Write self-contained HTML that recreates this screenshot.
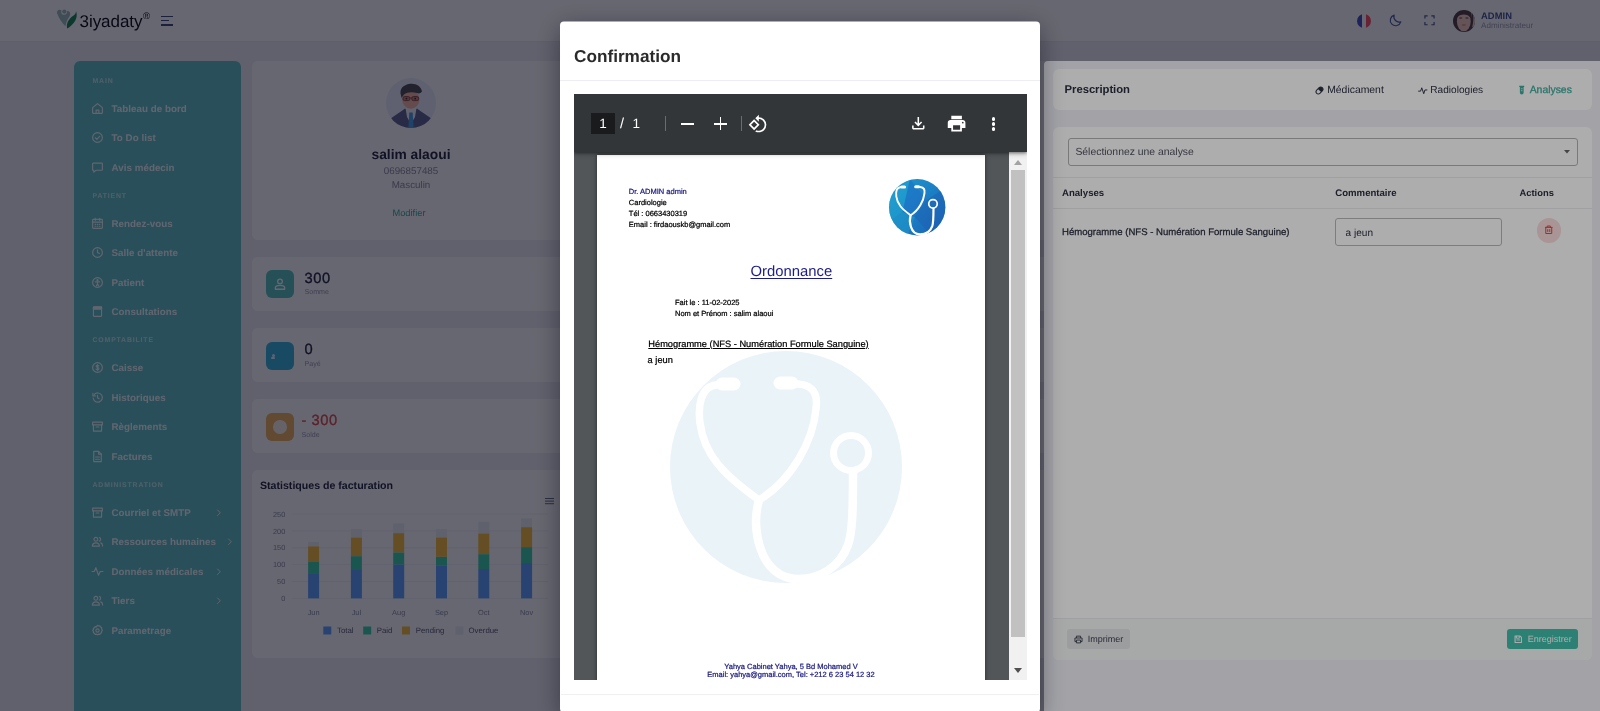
<!DOCTYPE html>
<html lang="fr">
<head>
<meta charset="utf-8">
<title>3iyadaty - Confirmation</title>
<style>
*{box-sizing:border-box;margin:0;padding:0}
html,body{width:1600px;height:711px;overflow:hidden}
body{text-rendering:geometricPrecision;background:#f0f1f7;font-family:"Liberation Sans",sans-serif;color:#333;position:relative}
.abs{position:absolute}
.t{position:absolute;white-space:nowrap;line-height:1;margin-top:.7px}
svg{position:absolute;overflow:visible}

/* ---------- header ---------- */
#hdr{position:absolute;left:0;top:0;width:1600px;height:41px;background:#fff;box-shadow:0 1px 1px rgba(0,0,0,.03)}
/* ---------- sidebar ---------- */
#side{position:absolute;left:74px;top:61px;width:167px;height:700px;background:#67c4c6;border-radius:6px 6px 0 0}
#side .cat{margin-top:.7px;position:absolute;left:18.5px;font-size:6.9px;font-weight:700;letter-spacing:.85px;color:#c4ecec;line-height:1;white-space:nowrap}
#side .it{margin-top:.7px;position:absolute;left:37.5px;font-size:9.75px;font-weight:700;color:#f0fafa;line-height:1;white-space:nowrap;letter-spacing:.05px}
#side svg{left:17px;width:13px;height:13px;fill:none;stroke:#f0fafa;stroke-width:2.1;stroke-linecap:round;stroke-linejoin:round}
#side svg.ch{left:140px;width:7.5px;height:7.5px;stroke-width:3}
/* ---------- cards ---------- */
.card{position:absolute;background:#fff;border-radius:6px}
/* ---------- overlays ---------- */
.ov{position:absolute;left:0;top:0;width:1600px;height:711px;background:rgba(0,0,36,.40)}
.ov2{background:rgba(0,0,0,.32)}
/* ---------- right panel ---------- */
#panel{position:absolute;left:1044px;top:61px;width:556px;height:660px;background:#f0f1f7;border-radius:4px 0 0 0}
/* ---------- modal ---------- */
#modal{position:absolute;left:560px;top:21px;width:480px;height:692px}
#mbg{position:absolute;left:0;top:0;width:480px;height:690.5px;background:#fff;border-radius:4px;transform:translateY(.5px);box-shadow:0 6px 26px rgba(0,0,20,.42)}
#pdf{position:absolute;left:14px;top:73px;width:453px;height:586px;background:#525659;overflow:hidden}
#tb{position:absolute;left:0;top:0;width:453px;height:58px;background:#323639;box-shadow:0 1px 3px rgba(0,0,0,.45),0 2px 6px rgba(0,0,0,.2)}
#page{position:absolute;left:23px;top:61px;width:388px;height:560px;background:#fff;box-shadow:0 0 4px rgba(0,0,0,.5);font-family:"Liberation Sans",sans-serif;color:#000}
#page .t{-webkit-text-stroke-width:.22px}
</style>
</head>
<body>
<div id="root" style="position:absolute;left:0;top:0;width:1600px;height:711px;overflow:hidden;will-change:transform">

<!-- ================= BASE PAGE ================= -->
<div id="hdr">
  <!-- logo -->
  <svg style="left:56px;top:9px;width:22px;height:20px" viewBox="0 0 22 20">
    <path d="M1.2 4.5C0.2 1.8 3.2-0.6 5.6 1.4C4.6 3.4 5.6 5.6 7.8 5.8C10 6 11.4 4.2 10.9 2.2C13.2 1.6 15.6 4.2 13.4 7.4C11.2 10.4 10.2 13.2 9.4 17.2C5.6 13.4 2.6 9 1.2 4.5Z" fill="#9fbfbc"/>
    <circle cx="8.3" cy="2.6" r="2.1" fill="#9fbfbc"/>
    <path d="M11.2 19.5C10 14.5 12.6 9.6 18 6.2C19.6 5 20 3.4 20 2.2C21.6 6.4 20.4 10.8 17.4 14.2C15.6 16.4 13.4 18.4 11.2 19.5Z" fill="#1f8a5c"/>
  </svg>
  <div class="t" style="left:79.5px;top:12.5px;font-size:17px;color:#15151f;letter-spacing:-.05px">3iyadaty</div>
  <div class="t" style="left:143px;top:11px;font-size:9.5px;color:#15151f">®</div>
  <div class="abs" style="left:161px;top:16px;width:11.5px;height:1.25px;background:#45507e"></div>
  <div class="abs" style="left:161px;top:20.2px;width:8px;height:1.25px;background:#45507e"></div>
  <div class="abs" style="left:161px;top:24.4px;width:11.5px;height:1.25px;background:#45507e"></div>
  <!-- right icons -->
  <div class="abs" style="left:1357px;top:13.6px;width:14.2px;height:14.2px;border-radius:50%;overflow:hidden;background:#fff">
    <div class="abs" style="left:0;top:0;width:4.7px;height:14px;background:#4a56c8"></div>
    <div class="abs" style="left:9.3px;top:0;width:4.7px;height:14px;background:#ff5568"></div>
  </div>
  <svg style="left:1388px;top:13.3px;width:15px;height:15px" viewBox="0 0 24 24" fill="none" stroke="#4f62a8" stroke-width="1.9" stroke-linecap="round" stroke-linejoin="round"><path d="M20.5 14.2A8.6 8.6 0 0 1 9.8 3.5a8.6 8.6 0 1 0 10.7 10.7z"/></svg>
  <svg style="left:1423.9px;top:15.3px;width:11px;height:10.6px" viewBox="0 0 24 24" preserveAspectRatio="none" fill="none" stroke="#4f5c96" stroke-width="2.6" stroke-linecap="butt" stroke-linejoin="miter"><path d="M2 8V2h6M16 2h6v6M22 16v6h-6M8 22H2v-6"/></svg>
  <!-- avatar -->
  <svg style="left:1453px;top:9.7px;width:22px;height:22px" viewBox="0 0 22 22">
    <clipPath id="hvc"><circle cx="11" cy="11" r="11"/></clipPath>
    <g clip-path="url(#hvc)">
      <rect width="22" height="22" fill="#58444a"/>
      <rect x="18.5" y="3" width="4" height="14" fill="#e9d2cc"/>
      <path d="M19.5 2C21 6 20.5 14 18.5 19L17 12Z" fill="#58444a"/>
      <ellipse cx="10.8" cy="11.5" rx="6.9" ry="9.8" fill="#f8cfc0"/>
      <path d="M3.5 8C4 3.5 8 1 11.5 1.5C15 2 17.5 4.5 18 8C16 5.5 13.5 4.5 11 4.5C8 4.5 5.5 5.5 3.5 8Z" fill="#58444a"/>
      <ellipse cx="7.7" cy="8" rx="1.7" ry=".8" fill="#7d5f60"/><ellipse cx="13.9" cy="8" rx="1.7" ry=".8" fill="#7d5f60"/>
      <ellipse cx="10.8" cy="15" rx="2.3" ry=".8" fill="#d98c86"/>
    </g>
  </svg>
  <div class="t" style="left:1481px;top:11.3px;font-size:9.35px;font-weight:700;color:#4a5a98;letter-spacing:.1px">ADMIN</div>
  <div class="t" style="left:1481px;top:21.8px;font-size:8.1px;color:#a3a6b5">Administrateur</div>
</div>
<div id="side">
  <div class="cat" style="top:17.7px">MAIN</div>
  <svg viewBox="0 0 24 24" style="top:41.0px;color:#f0fafa"><path d="M3 10.5 12 3l9 7.5V20a1 1 0 0 1-1 1H4a1 1 0 0 1-1-1z"/><path d="M9.500 21v-6h5v6"/></svg><div class="it" style="top:43.2px">Tableau de bord</div>
  <svg viewBox="0 0 24 24" style="top:70.0px;color:#f0fafa"><circle cx="12" cy="12" r="9"/><path d="M8 12.500l2.800 2.800L16 9.800"/></svg><div class="it" style="top:72.2px">To Do list</div>
  <svg viewBox="0 0 24 24" style="top:100.0px;color:#f0fafa"><path d="M4 4h16a1 1 0 0 1 1 1v11a1 1 0 0 1-1 1H9.500L5 20.500V17H4a1 1 0 0 1-1-1V5a1 1 0 0 1 1-1z"/></svg><div class="it" style="top:102.2px">Avis médecin</div>
  <div class="cat" style="top:132.7px">PATIENT</div>
  <svg viewBox="0 0 24 24" style="top:156.0px;color:#f0fafa"><rect x="3" y="4.500" width="18" height="16.500" rx="1.500"/><path d="M3 9.500h18M8 2.500v4M16 2.500v4M7.500 13.500h1M11.500 13.500h1M15.500 13.500h1M7.500 17h1M11.500 17h1M15.500 17h1"/></svg><div class="it" style="top:158.2px">Rendez-vous</div>
  <svg viewBox="0 0 24 24" style="top:185.0px;color:#f0fafa"><circle cx="12" cy="12" r="9"/><path d="M12 7v5l3.500 2"/></svg><div class="it" style="top:187.2px">Salle d'attente</div>
  <svg viewBox="0 0 24 24" style="top:215.0px;color:#f0fafa"><circle cx="12" cy="12" r="9"/><circle cx="12" cy="7.800" r="1" fill="currentColor"/><path d="M8 10.800h8M12 10.800v3.700M12 14.500l-2 3.500M12 14.500l2 3.500"/></svg><div class="it" style="top:217.2px">Patient</div>
  <svg viewBox="0 0 24 24" style="top:244.0px;color:#f0fafa"><rect x="4.500" y="3.500" width="15" height="17.500" rx="1"/><path d="M4.500 4h15v3.500h-15z" fill="currentColor"/></svg><div class="it" style="top:246.2px">Consultations</div>
  <div class="cat" style="top:276.7px">COMPTABILITE</div>
  <svg viewBox="0 0 24 24" style="top:300.0px;color:#f0fafa"><circle cx="12" cy="12" r="9"/><path d="M12 6.500v11M14.600 9.300c-.5-1-1.500-1.500-2.600-1.500-1.500 0-2.600.8-2.600 2s1 1.800 2.600 2.100c1.700.3 2.700.9 2.700 2.200s-1.200 2.100-2.700 2.100c-1.200 0-2.300-.5-2.800-1.500"/></svg><div class="it" style="top:302.2px">Caisse</div>
  <svg viewBox="0 0 24 24" style="top:330.0px;color:#f0fafa"><path d="M4 13a8.500 8.500 0 1 0 2.200-6.700"/><path d="M3.500 4.500v4.500h4.500"/><path d="M12 8v4.500l3 1.800"/></svg><div class="it" style="top:332.2px">Historiques</div>
  <svg viewBox="0 0 24 24" style="top:359.0px;color:#f0fafa"><path d="M3 4h18v5H3z"/><path d="M4.500 9v11.500h15V9M9.500 13h5"/></svg><div class="it" style="top:361.2px">Règlements</div>
  <svg viewBox="0 0 24 24" style="top:389.0px;color:#f0fafa"><path d="M6 2.500h8l5 5V21a.5.5 0 0 1-.5.500h-13a.5.5 0 0 1-.5-.5V3a.5.5 0 0 1 .5-.5z"/><path d="M14 2.500v5h5M8.500 13h7M8.500 17h7"/></svg><div class="it" style="top:391.2px">Factures</div>
  <div class="cat" style="top:421.7px">ADMINISTRATION</div>
  <svg viewBox="0 0 24 24" style="top:445.0px;color:#f0fafa"><path d="M3 4h18v5H3z"/><path d="M4.500 9v11.500h15V9M9.500 13h5"/></svg><div class="it" style="top:447.2px">Courriel et SMTP</div>
  <svg class="ch" viewBox="0 0 24 24" style="left:140.5px;top:447.8px"><path d="M8 3l9 9-9 9"/></svg>
  <svg viewBox="0 0 24 24" style="top:474.0px;color:#f0fafa"><circle cx="9" cy="8" r="3.500"/><path d="M2.500 20.500c0-3.600 2.900-6 6.500-6s6.500 2.400 6.500 6z"/><path d="M15.500 4.700a3.500 3.500 0 0 1 0 6.600M18 14.500c2.200.8 3.500 2.800 3.500 6"/></svg><div class="it" style="top:476.2px">Ressources humaines</div>
  <svg class="ch" viewBox="0 0 24 24" style="left:151.5px;top:476.8px"><path d="M8 3l9 9-9 9"/></svg>
  <svg viewBox="0 0 24 24" style="top:504.0px;color:#f0fafa"><path d="M2 12h4l3-7 5 14 3-7h5"/></svg><div class="it" style="top:506.2px">Données médicales</div>
  <svg class="ch" viewBox="0 0 24 24" style="left:140.5px;top:506.8px"><path d="M8 3l9 9-9 9"/></svg>
  <svg viewBox="0 0 24 24" style="top:533.0px;color:#f0fafa"><circle cx="9" cy="8" r="3.500"/><path d="M2.500 20.500c0-3.600 2.900-6 6.500-6s6.500 2.400 6.500 6z"/><path d="M15.500 4.700a3.500 3.500 0 0 1 0 6.600M18 14.500c2.200.8 3.500 2.800 3.500 6"/></svg><div class="it" style="top:535.2px">Tiers</div>
  <svg class="ch" viewBox="0 0 24 24" style="left:140.5px;top:535.8px"><path d="M8 3l9 9-9 9"/></svg>
  <svg viewBox="0 0 24 24" style="top:563.0px;color:#f0fafa"><path d="M12 2.500l2 1.200 2.300-.3 1.200 2 2.100 1-.1 2.300L21 12l-1.500 1.800.1 2.300-2.100 1-1.200 2-2.300-.3-2 1.200-2-1.200-2.300.3-1.200-2-2.100-1 .1-2.300L3 12l1.500-1.800-.1-2.300 2.100-1 1.200-2 2.300.3z"/><circle cx="12" cy="12" r="3"/></svg><div class="it" style="top:565.2px">Parametrage</div>
</div>
<div id="main">
  <!-- profile card -->
  <div class="card" style="left:252px;top:61px;width:1333px;height:179px"></div>
  <svg style="left:386px;top:77.6px;width:50px;height:50px" viewBox="0 0 50 50">
    <clipPath id="avc"><circle cx="25" cy="25" r="25"/></clipPath>
    <g clip-path="url(#avc)">
      <rect width="50" height="50" fill="#e9f0ff"/>
      <path d="M4 41C9 37 15 34 19 30.5L25 33L31 30.5C35 34 41 37 46 41L46 52H4Z" fill="#646a96"/>
      <path d="M19.5 30L25 31.5L30.5 30L29 39L25 46L21 39Z" fill="#f4f6fb"/>
      <path d="M23.3 34.5h3.4l.9 15.5h-5.2z" fill="#4fa6ea"/>
      <ellipse cx="24.8" cy="21.5" rx="8.7" ry="9.3" fill="#f7bda6"/>
      <path d="M15 17.5C13 11 17 7 24 5.8C30 5 35 8 36 13.5C34.5 15.5 33 15.8 31 15C26 13.5 21 14 18 16.5C17 18 16 19 15.5 20Z" fill="#55555e"/>
      <g fill="#c98a78" stroke="#8a4a44" stroke-width=".9"><rect x="17" y="18.6" width="6.8" height="4" rx="1.5"/><rect x="25.8" y="18.6" width="6.8" height="4" rx="1.5"/></g><path d="M23.8 20h2" stroke="#8a4a44" stroke-width=".8"/><circle cx="20.4" cy="20.6" r=".9" fill="#4a3030"/><circle cx="29.2" cy="20.6" r=".9" fill="#4a3030"/>
    </g>
  </svg>
  <div class="t" style="left:311px;width:200px;text-align:center;top:147.7px;font-size:13.8px;font-weight:700;color:#2c2f45">salim alaoui</div>
  <div class="t" style="left:311px;width:200px;text-align:center;top:166.7px;font-size:9.8px;color:#8c8fa3">0696857485</div>
  <div class="t" style="left:311px;width:200px;text-align:center;top:180.7px;font-size:9.8px;color:#8c8fa3">Masculin</div>
  <div class="t" style="left:309px;width:200px;text-align:center;top:208.5px;font-size:9.3px;color:#3fae9f">Modifier</div>

  <!-- stat cards -->
  <div class="card" style="left:252px;top:257px;width:1333px;height:54px"></div>
  <div class="abs" style="left:266px;top:270px;width:27.5px;height:28px;border-radius:6px;background:#5fc6c0"></div>
  <svg style="left:272.8px;top:277px;width:14px;height:14px" viewBox="0 0 24 24" fill="none" stroke="#fff" stroke-width="2.2"><circle cx="12" cy="7.5" r="4"/><path d="M4 21v-2.5c0-2.5 2.5-4 8-4s8 1.5 8 4V21z" stroke-linejoin="round"/></svg>
  <div class="t" style="left:304.5px;top:271.2px;font-size:14.7px;letter-spacing:.55px;color:#2c2f45;-webkit-text-stroke:.3px #2c2f45">300</div>
  <div class="t" style="left:304.5px;top:288.7px;font-size:7.1px;color:#9a9db0">Somme</div>

  <div class="card" style="left:252px;top:328px;width:1333px;height:54px"></div>
  <div class="abs" style="left:266px;top:342px;width:27.5px;height:27.5px;border-radius:6px;background:#3fb6dc"></div>
  <div class="abs" style="left:272px;top:353.5px;width:3px;height:3px;border-radius:50%;background:#e6f3fb"></div>
  <div class="abs" style="left:271px;top:356.5px;width:3.5px;height:2px;border-radius:1px;background:#e6f3fb"></div>
  <div class="t" style="left:304.5px;top:342.6px;font-size:14.7px;letter-spacing:.55px;color:#2c2f45;-webkit-text-stroke:.3px #2c2f45">0</div>
  <div class="t" style="left:304.5px;top:360.7px;font-size:7.1px;color:#9a9db0">Payé</div>

  <div class="card" style="left:252px;top:398.5px;width:1333px;height:54.5px"></div>
  <div class="abs" style="left:266px;top:413px;width:27.5px;height:27.5px;border-radius:6px;background:#f0b565"></div>
  <div class="abs" style="left:273px;top:420px;width:13.5px;height:13.5px;border-radius:50%;background:#faf3ea"></div>
  <div class="t" style="left:301.5px;top:413.5px;font-size:14.7px;letter-spacing:.55px;color:#e0524f;-webkit-text-stroke:.3px #e0524f">- 300</div>
  <div class="t" style="left:301.5px;top:431.7px;font-size:7.1px;color:#9a9db0">Solde</div>

  <!-- chart card -->
  <div class="card" style="left:252px;top:470px;width:1333px;height:187.5px"></div>
  <div class="t" style="left:260px;top:480.3px;font-size:10.6px;font-weight:700;color:#2c2f45">Statistiques de facturation</div>
  <div class="abs" style="left:545px;top:498.3px;width:9px;height:1.2px;background:#6e7288;box-shadow:0 2.6px 0 #6e7288,0 5.2px 0 #6e7288"></div>
  <svg style="left:0;top:0;width:1600px;height:711px" viewBox="0 0 1600 711" font-family="Liberation Sans, sans-serif">
    <line x1="292" y1="598.4" x2="548" y2="598.4" stroke="#f1f2f7" stroke-width="1"/><text x="285.3" y="601.0" text-anchor="end" font-size="7.4" fill="#8e91a6">0</text><line x1="292" y1="581.5" x2="548" y2="581.5" stroke="#f1f2f7" stroke-width="1"/><text x="285.3" y="584.1" text-anchor="end" font-size="7.4" fill="#8e91a6">50</text><line x1="292" y1="564.6" x2="548" y2="564.6" stroke="#f1f2f7" stroke-width="1"/><text x="285.3" y="567.2" text-anchor="end" font-size="7.4" fill="#8e91a6">100</text><line x1="292" y1="547.8" x2="548" y2="547.8" stroke="#f1f2f7" stroke-width="1"/><text x="285.3" y="550.4" text-anchor="end" font-size="7.4" fill="#8e91a6">150</text><line x1="292" y1="530.9" x2="548" y2="530.9" stroke="#f1f2f7" stroke-width="1"/><text x="285.3" y="533.5" text-anchor="end" font-size="7.4" fill="#8e91a6">200</text><line x1="292" y1="514.0" x2="548" y2="514.0" stroke="#f1f2f7" stroke-width="1"/><text x="285.3" y="516.6" text-anchor="end" font-size="7.4" fill="#8e91a6">250</text>
    <rect x="308.1" y="542.0" width="11" height="4.4" fill="#eceef5"/><rect x="308.1" y="546.4" width="11" height="15.2" fill="#f8c143"/><rect x="308.1" y="561.6" width="11" height="11.5" fill="#45d3ac"/><rect x="308.1" y="573.1" width="11" height="25.3" fill="#65a5ff"/><rect x="350.9" y="528.9" width="11" height="8.8" fill="#eceef5"/><rect x="350.9" y="537.6" width="11" height="18.6" fill="#f8c143"/><rect x="350.9" y="556.2" width="11" height="13.8" fill="#45d3ac"/><rect x="350.9" y="570.0" width="11" height="28.4" fill="#65a5ff"/><rect x="393.2" y="523.5" width="11" height="9.8" fill="#eceef5"/><rect x="393.2" y="533.2" width="11" height="19.2" fill="#f8c143"/><rect x="393.2" y="552.5" width="11" height="12.2" fill="#45d3ac"/><rect x="393.2" y="564.6" width="11" height="33.8" fill="#65a5ff"/><rect x="436.0" y="528.9" width="11" height="8.8" fill="#eceef5"/><rect x="436.0" y="537.6" width="11" height="19.2" fill="#f8c143"/><rect x="436.0" y="556.9" width="11" height="8.8" fill="#45d3ac"/><rect x="436.0" y="565.7" width="11" height="32.7" fill="#65a5ff"/><rect x="478.3" y="521.8" width="11" height="11.8" fill="#eceef5"/><rect x="478.3" y="533.6" width="11" height="20.6" fill="#f8c143"/><rect x="478.3" y="554.2" width="11" height="14.9" fill="#45d3ac"/><rect x="478.3" y="569.0" width="11" height="29.4" fill="#65a5ff"/><rect x="521.1" y="518.4" width="11" height="8.8" fill="#eceef5"/><rect x="521.1" y="527.2" width="11" height="19.9" fill="#f8c143"/><rect x="521.1" y="547.1" width="11" height="15.9" fill="#45d3ac"/><rect x="521.1" y="563.0" width="11" height="35.4" fill="#65a5ff"/>
    <text x="313.6" y="614.8" text-anchor="middle" font-size="7.4" fill="#8e91a6">Jun</text><text x="356.4" y="614.8" text-anchor="middle" font-size="7.4" fill="#8e91a6">Jul</text><text x="398.7" y="614.8" text-anchor="middle" font-size="7.4" fill="#8e91a6">Aug</text><text x="441.5" y="614.8" text-anchor="middle" font-size="7.4" fill="#8e91a6">Sep</text><text x="483.8" y="614.8" text-anchor="middle" font-size="7.4" fill="#8e91a6">Oct</text><text x="526.6" y="614.8" text-anchor="middle" font-size="7.4" fill="#8e91a6">Nov</text>
    <rect x="323.3" y="626.5" width="8" height="8" fill="#65a5ff"/><text x="337" y="633.2" font-size="7.8" fill="#5e6178">Total</text>
    <rect x="363.2" y="626.5" width="8" height="8" fill="#45d3ac"/><text x="376.7" y="633.2" font-size="7.8" fill="#5e6178">Paid</text>
    <rect x="402" y="626.5" width="8" height="8" fill="#f8c143"/><text x="415.8" y="633.2" font-size="7.8" fill="#5e6178">Pending</text>
    <rect x="455.4" y="626.5" width="8" height="8" fill="#eceef5"/><text x="468.5" y="633.2" font-size="7.8" fill="#5e6178">Overdue</text>
  </svg>
</div>

<div class="ov"></div>

<!-- ================= PRESCRIPTION PANEL ================= -->
<div id="panel">
  <div class="card" style="left:9.4px;top:8.0px;width:538.4px;height:41px"></div>
  <div class="t" style="left:20.6px;top:23.3px;font-size:11.3px;font-weight:700;color:#2c2f3f;letter-spacing:-.05px">Prescription</div>
  <!-- tabs -->
  <svg style="left:270.6px;top:24.5px;width:9px;height:9px" viewBox="0 0 24 24"><g transform="rotate(-45 12 12)"><rect x="1.5" y="6" width="21" height="12" rx="6" fill="none" stroke="#2c2f3f" stroke-width="2.6"/><path d="M12 6h4.5a6 6 0 0 1 0 12H12z" fill="#2c2f3f"/></g></svg>
  <div class="t" style="left:283.2px;top:24.6px;font-size:10.4px;color:#2c2f3f">Médicament</div>
  <svg style="left:374.0px;top:24.5px;width:9.5px;height:9.5px" viewBox="0 0 24 24" fill="none" stroke="#2c2f3f" stroke-width="2.4" stroke-linejoin="round" stroke-linecap="round"><path d="M1.5 13h5l3-8.5 5 15 3-9.5h5"/></svg>
  <div class="t" style="left:386.3px;top:24.6px;font-size:10.1px;color:#2c2f3f">Radiologies</div>
  <svg style="left:473.5px;top:24.3px;width:7.5px;height:10px" viewBox="0 0 18 24"><path d="M3 1.5h12v3h-1.5V18a4.5 4.5 0 0 1-9 0V4.5H3z" fill="#3fae9f"/><path d="M7 7h4v3H7zM7 12h4v3H7z" fill="#fff" opacity=".55"/></svg>
  <div class="t" style="left:485.7px;top:24.6px;font-size:10.4px;color:#3fae9f;-webkit-text-stroke:.3px #3fae9f">Analyses</div>

  <div class="card" style="left:9.4px;top:65.6px;width:538.4px;height:533.4px"></div>
  <div class="abs" style="left:9.4px;top:556.6px;width:538.4px;height:42.4px;background:#f7f9f8;border-top:1px solid #ececf1;border-radius:0 0 6px 6px"></div>
  <div class="abs" style="left:23.5px;top:77.2px;width:510px;height:27.4px;border:1px solid #b3b3b3;border-radius:3px"></div>
  <div class="t" style="left:31.4px;top:86.5px;font-size:10.4px;color:#50525e">Sélectionnez une analyse</div>
  <svg style="left:519.5px;top:89.0px;width:6px;height:3.4px" viewBox="0 0 6 3.4"><path d="M0 0h6L3 3.4z" fill="#666"/></svg>
  <div class="abs" style="left:9.4px;top:115.5px;width:538.4px;height:1px;background:#ececf1"></div>
  <div class="t" style="left:18.0px;top:127.2px;font-size:9.6px;font-weight:700;color:#2c2f3f">Analyses</div>
  <div class="t" style="left:291.3px;top:127.2px;font-size:9.6px;font-weight:700;color:#2c2f3f">Commentaire</div>
  <div class="t" style="left:475.5px;top:126.6px;font-size:9.4px;font-weight:700;color:#2c2f3f">Actions</div>
  <div class="abs" style="left:9.4px;top:147.0px;width:538.4px;height:1px;background:#ececf1"></div>
  <div class="t" style="left:18.0px;top:166.0px;font-size:9.57px;color:#2c2f3f;-webkit-text-stroke:.25px #2c2f3f">Hémogramme (NFS - Numération Formule Sanguine)</div>
  <div class="abs" style="left:291.3px;top:157.3px;width:167.2px;height:28px;border:1px solid #b9b9bd;border-radius:3px;background:#fff"></div>
  <div class="t" style="left:301.6px;top:167.2px;font-size:10.05px;color:#2c2f3f">a jeun</div>
  <div class="abs" style="left:492.6px;top:156.8px;width:24.8px;height:24.8px;border-radius:50%;background:#f9dcdc"></div>
  <svg style="left:500.3px;top:164.2px;width:9.5px;height:9.5px" viewBox="0 0 24 24" fill="none" stroke="#e0463f" stroke-width="2.5" stroke-linejoin="round"><path d="M2.5 6h19M8 6V2.5h8V6M4.5 6v15.5h15V6M9.5 10.5v7M14.5 10.5v7"/></svg>
  <!-- footer buttons -->
  <div class="abs" style="left:23.4px;top:568.0px;width:62.6px;height:20.3px;border-radius:3px;background:#e6e7ea"></div>
  <svg style="left:30.0px;top:573.7px;width:9px;height:9px" viewBox="0 0 24 24" fill="none" stroke="#3a3d4c" stroke-width="2.4" stroke-linejoin="round"><path d="M6.5 8V3h11v5M6.5 17.5H2.5V8h19v9.5h-4M6.5 13.5h11V21h-11z"/></svg>
  <div class="t" style="left:43.7px;top:573.7px;font-size:9px;color:#3a3d4c">Imprimer</div>
  <div class="abs" style="left:463.4px;top:568.0px;width:70.2px;height:20.3px;border-radius:3px;background:#42bfab"></div>
  <svg style="left:470.3px;top:574.0px;width:8.5px;height:8.5px" viewBox="0 0 24 24" fill="none" stroke="#fff" stroke-width="3" stroke-linejoin="round"><path d="M3 3h14l4 4v14H3z"/><path d="M7 3v6h8V3M7 14h10" stroke-width="2.6"/></svg>
  <div class="t" style="left:483.7px;top:573.7px;font-size:9px;color:#fff">Enregistrer</div>
</div>

<div class="ov ov2"></div>

<!-- ================= CONFIRMATION MODAL ================= -->
<div id="modal">
  <div id="mbg"></div>
  <div class="t" style="left:14px;top:26.8px;font-size:17.2px;font-weight:700;color:#2b2b2b">Confirmation</div>
  <div class="abs" style="left:0;top:59px;width:480px;height:1px;background:#eeeef2"></div>
  <div id="pdf">
    <div id="page">
      <!-- watermark -->
      <svg style="left:73.2px;top:195.7px;width:232px;height:232px" viewBox="-116 -116 232 232">
        <circle r="116" fill="#e9f3f8"/>
        <g fill="none" stroke="#fff" stroke-linecap="round">
          <path d="M-70 -82C-86 -80 -88 -60 -86 -44C-82 -12 -62 8 -27 33M12 -83C28 -82 32 -72 30 -58C27 -26 6 13 -27 33" stroke-width="7.5"/>
          <path d="M-27 33C-32 50 -30 68 -26 80C-20 100 -6 112 12 112C34 112 54 100 62 78C66 66 67 50 67 6" stroke-width="8.5"/>
          <circle cx="65" cy="-14" r="17.5" stroke-width="7"/>
          <path d="M-64 -83h12M-6 -84h12" stroke-width="13"/>
        </g>
      </svg>
      <!-- logo -->
      <svg style="left:292.3px;top:23.8px;width:56.4px;height:56.4px" viewBox="-116 -116 232 232">
        <defs><linearGradient id="lg" x1="0" y1="0" x2="1" y2="1"><stop offset="0" stop-color="#1f9ccf"/><stop offset=".5" stop-color="#1b7fc4"/><stop offset="1" stop-color="#1a5fb4"/></linearGradient></defs>
        <circle r="116" fill="url(#lg)"/>
        <clipPath id="cc"><circle r="116"/></clipPath><g clip-path="url(#cc)"><path d="M-116 -40L-30 -116L-60 20L-116 60Z" fill="#21a6cf" opacity=".55"/><path d="M-60 20L-30 -116L40 -30L-10 40Z" fill="#1e6fc4" opacity=".6"/><path d="M40 -30L116 -80L116 60L60 116L-10 40Z" fill="#1d5fb2" opacity=".5"/><path d="M-116 60L-60 20L-10 40L-40 116Z" fill="#1f9bc9" opacity=".5"/></g>
        <g fill="none" stroke="#fff" stroke-linecap="round">
          <path d="M-70 -82C-86 -80 -88 -60 -86 -44C-82 -12 -62 8 -27 33M12 -83C28 -82 32 -72 30 -58C27 -26 6 13 -27 33" stroke-width="8"/>
          <path d="M-27 33C-32 50 -30 68 -26 80C-20 100 -6 112 12 112C34 112 54 100 62 78C66 66 67 50 67 6" stroke-width="9"/>
          <circle cx="65" cy="-14" r="17.5" stroke-width="7"/>
          <path d="M-64 -83h12M-6 -84h12" stroke-width="13"/>
        </g>
      </svg>
      <div class="t" style="left:31.8px;top:32.3px;font-size:7.5px;color:#1a1a80">Dr. ADMIN admin</div>
      <div class="t" style="left:31.8px;top:43.7px;font-size:7.5px">Cardiologie</div>
      <div class="t" style="left:31.8px;top:54.5px;font-size:7.5px">Tél : 0663430319</div>
      <div class="t" style="left:31.8px;top:65.3px;font-size:7.5px">Email : firdaouskb@gmail.com</div>
      <div class="t" style="left:153.5px;top:108.9px;font-size:14.85px;-webkit-text-stroke-width:0;color:#1c1c8a;text-decoration:underline;text-decoration-thickness:1px;text-underline-offset:1.5px">Ordonnance</div>
      <div class="t" style="left:78.0px;top:143.3px;font-size:7.5px">Fait le : 11-02-2025</div>
      <div class="t" style="left:78.0px;top:154.6px;font-size:7.5px">Nom et Prénom : salim alaoui</div>
      <div class="t" style="left:51.3px;top:184.2px;font-size:9.27px;text-decoration:underline;text-decoration-thickness:.8px;text-underline-offset:1px">Hémogramme (NFS - Numération Formule Sanguine)</div>
      <div class="t" style="left:50.6px;top:200.4px;font-size:9.27px">a jeun</div>
      <div class="t" style="left:0;width:388px;text-align:center;top:507.0px;font-size:7.5px;color:#1a1a80">Yahya Cabinet Yahya, 5 Bd Mohamed V</div>
      <div class="t" style="left:0;width:388px;text-align:center;top:515.5px;font-size:7.5px;color:#1a1a80">Email: yahya@gmail.com, Tel: +212 6 23 54 12 32</div>
    </div>
    <!-- scrollbar -->
    <div class="abs" style="left:435px;top:58px;width:18px;height:528px;background:#f1f1f1"></div>
    <div class="abs" style="left:437px;top:76px;width:14px;height:467px;background:#c1c1c1"></div>
    <svg style="left:440px;top:65.5px;width:8px;height:5px" viewBox="0 0 8 5"><path d="M0 5L4 0L8 5z" fill="#a3a3a3"/></svg>
    <svg style="left:440px;top:573.5px;width:8px;height:5px" viewBox="0 0 8 5"><path d="M0 0L4 5L8 0z" fill="#505050"/></svg>
    <div id="tb">
      <div class="abs" style="left:17px;top:19px;width:24px;height:21px;background:#191b1c"></div>
      <div class="t" style="left:17px;width:24px;text-align:center;top:22.5px;font-size:13.5px;color:#fff">1</div>
      <div class="t" style="left:46px;top:22.5px;font-size:14.5px;color:#fff">/</div>
      <div class="t" style="left:58.5px;top:22.5px;font-size:13.5px;color:#fff">1</div>
      <div class="abs" style="left:91px;top:22px;width:1px;height:15px;background:#6a6d70"></div>
      <div class="abs" style="left:107px;top:29px;width:13px;height:1.6px;background:#fff"></div>
      <div class="abs" style="left:140px;top:29px;width:13px;height:1.6px;background:#fff"></div>
      <div class="abs" style="left:145.7px;top:23.3px;width:1.6px;height:13px;background:#fff"></div>
      <div class="abs" style="left:167px;top:22px;width:1px;height:15px;background:#6a6d70"></div>
      <svg style="left:174px;top:19.5px;width:20px;height:20px" viewBox="0 0 24 24" fill="#fff"><path d="M7.34 6.41L.860 12.9l6.49 6.48 6.49-6.48-6.5-6.49zM3.69 12.9l3.66-3.66L11 12.9l-3.66 3.66-3.65-3.66zm15.67-6.26A8.95 8.95 0 0 0 13 4V.760L8.76 5 13 9.24V6c1.79 0 3.58.68 4.95 2.05a7.007 7.007 0 0 1 0 9.9 6.973 6.973 0 0 1-7.79 1.44l-1.49 1.49C10.02 21.62 11.51 22 13 22c2.3 0 4.61-.88 6.36-2.64a8.98 8.98 0 0 0 0-12.72z"/></svg>
      <svg style="left:335.3px;top:19.8px;width:18.6px;height:18.6px" viewBox="0 0 24 24" fill="#fff"><path d="M18 15v3H6v-3H4v3c0 1.1.9 2 2 2h12c1.1 0 2-.9 2-2v-3h-2zm-1-4l-1.41-1.41L13 12.17V4h-2v8.17L8.41 9.59 7 11l5 5 5-5z"/></svg>
      <svg style="left:372px;top:19.2px;width:21.2px;height:21.2px" viewBox="0 0 24 24" fill="#fff"><path d="M19 8H5c-1.66 0-3 1.34-3 3v6h4v4h12v-4h4v-6c0-1.66-1.34-3-3-3zm-3 11H8v-5h8v5zm3-7c-.55 0-1-.45-1-1s.45-1 1-1 1 .45 1 1-.45 1-1 1zm-1-9H6v4h12V3z"/></svg>
      <div class="abs" style="left:418px;top:23.3px;width:3.4px;height:3.4px;border-radius:50%;background:#fff;box-shadow:0 5px 0 #fff,0 10px 0 #fff"></div>
    </div>
  </div>
  <div class="abs" style="left:1px;top:673px;width:478px;height:1px;background:#f0f0f4"></div>
</div>

</div>
</body>
</html>
